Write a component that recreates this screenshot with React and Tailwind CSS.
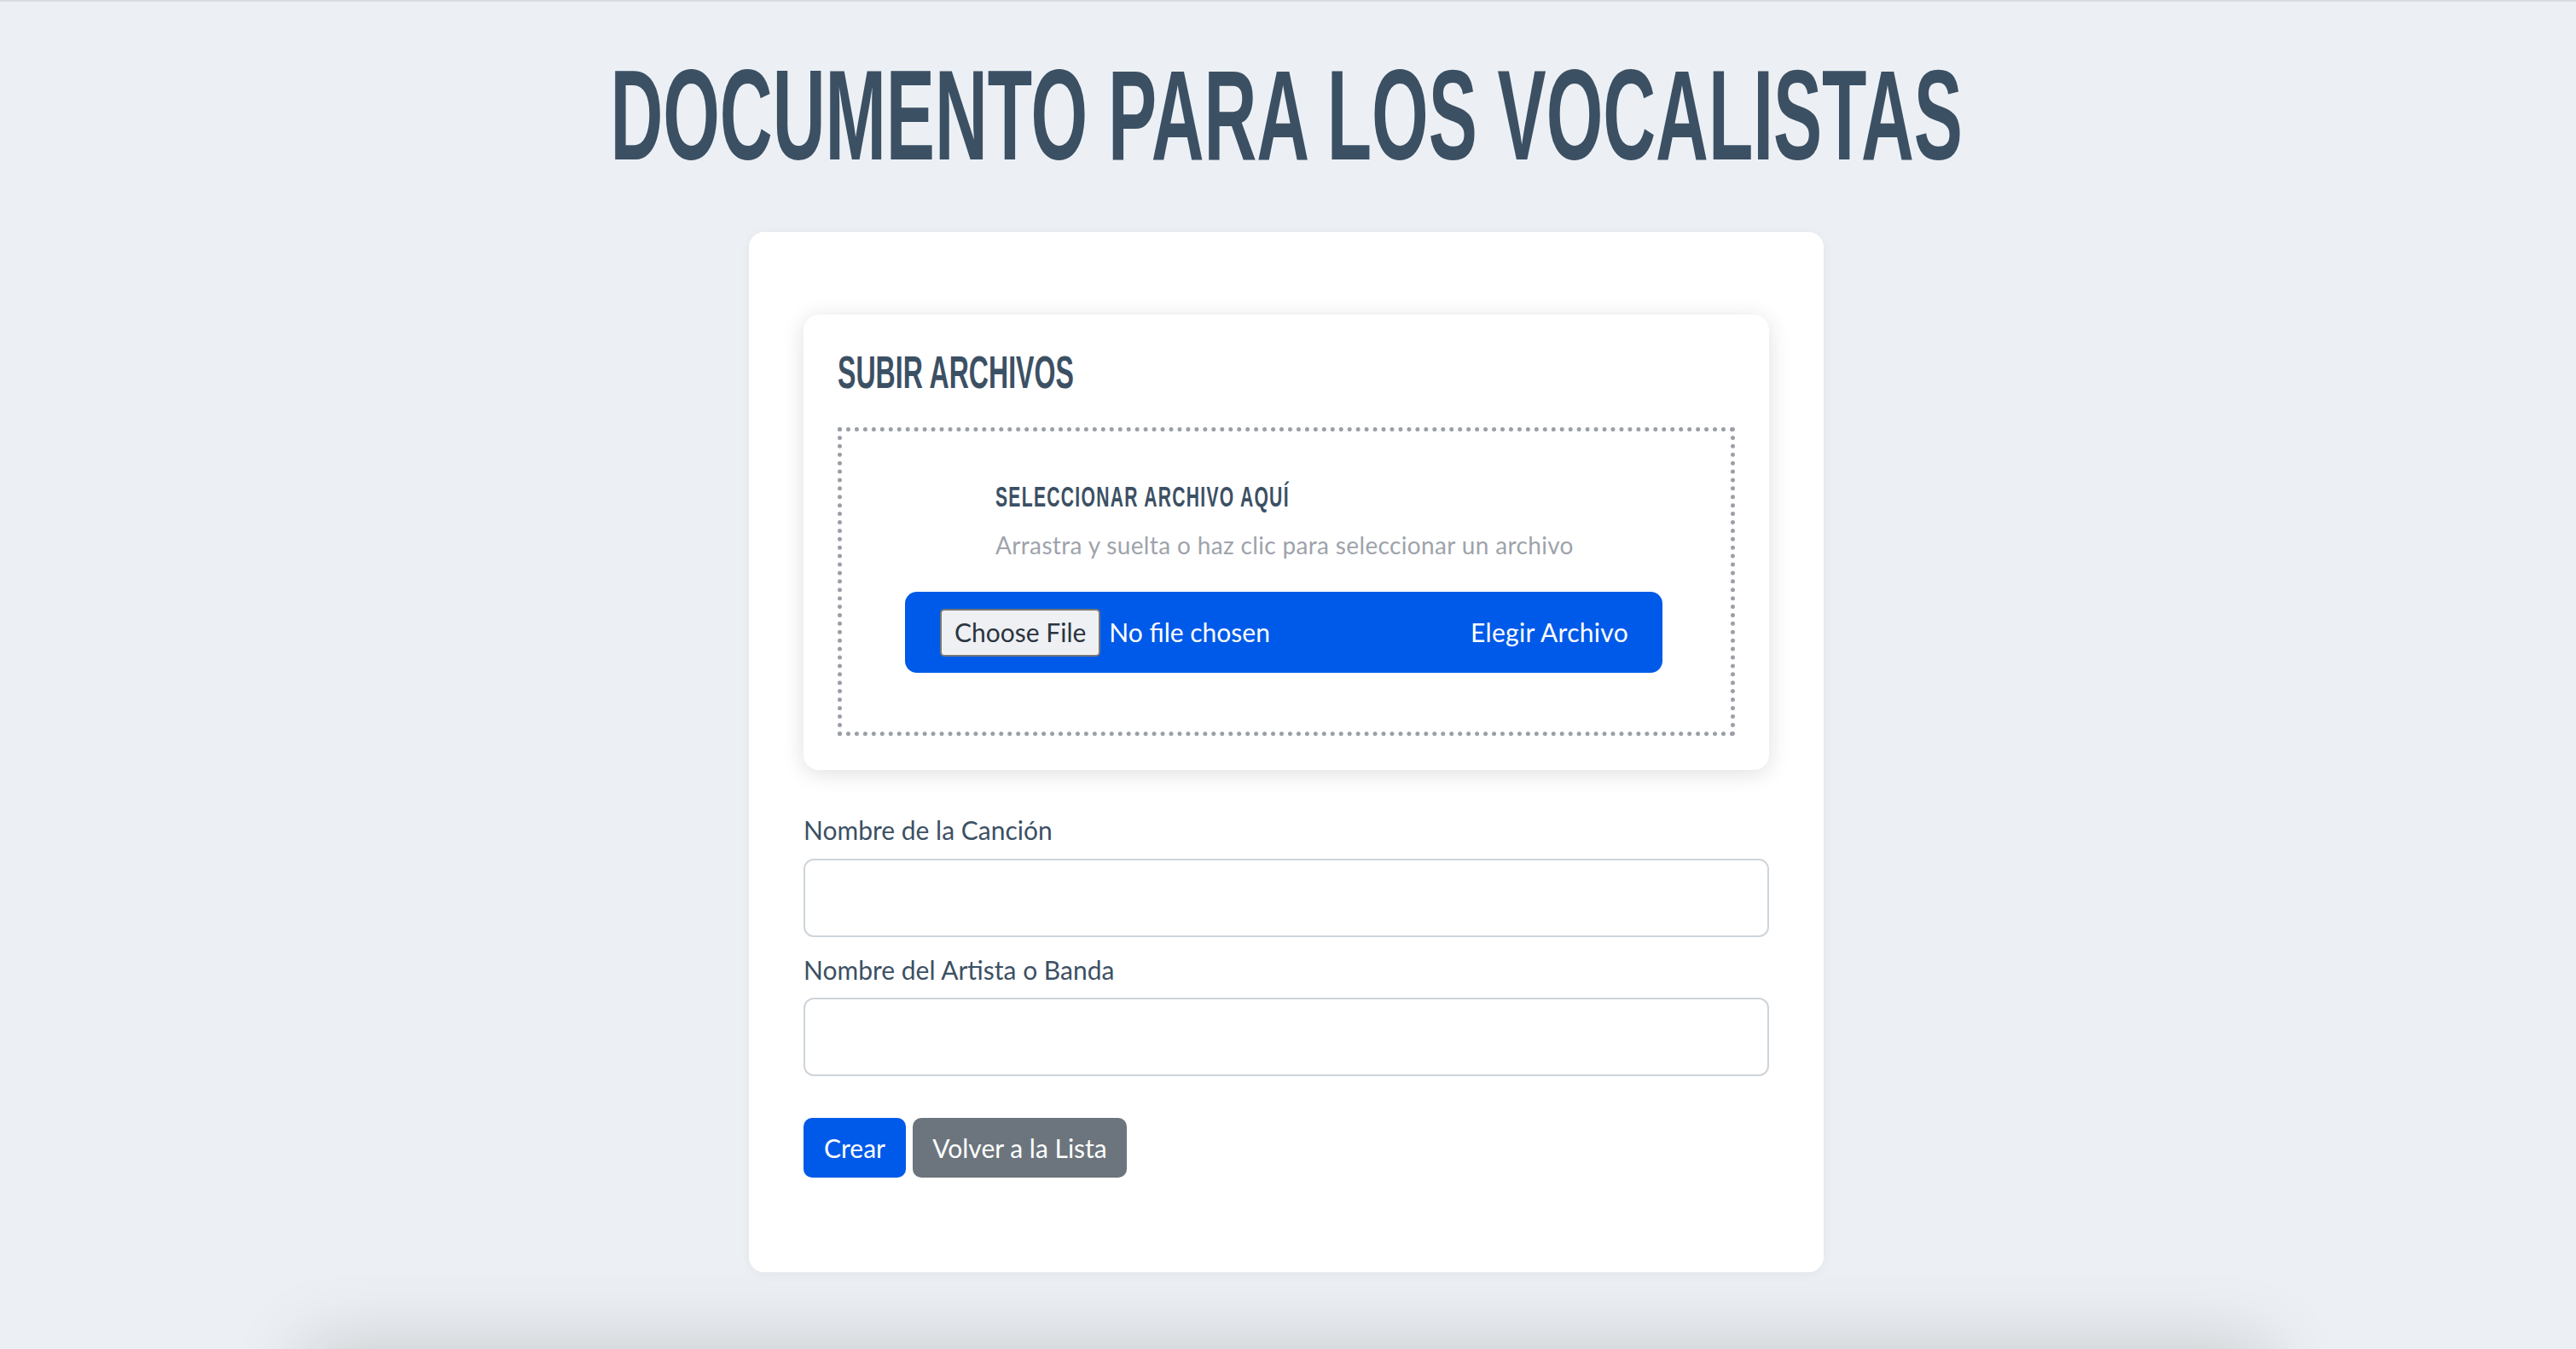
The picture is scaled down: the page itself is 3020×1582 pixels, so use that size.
export default function App() {
  const body = { fontFamily: "Lato, 'Noto Sans', sans-serif" };
  const display = { fontFamily: "'Liberation Sans', Arial, sans-serif" };

  return (
    <div className="min-h-screen bg-[#ecf0f4] border-t-2 border-[#d9dde2] overflow-hidden flex flex-col items-center pr-[4px]" style={body}>
      <h1
        className="mt-[57px] text-[151px] leading-none font-bold text-[#3c5064] whitespace-nowrap scale-x-[0.567]"
        style={display}
      >
        DOCUMENTO PARA LOS VOCALISTAS
      </h1>

      <div className="mt-[62px] w-[1260px] bg-white rounded-[18px] shadow-[0_2px_12px_rgba(0,0,0,0.05)] px-16 pt-[97px] pb-[111px]">
        <div className="rounded-[18px] bg-white shadow-[0_4px_26px_rgba(0,0,0,0.13)] px-10 pt-[40px] pb-[40px]">
          <h3
            className="text-[54px] leading-none font-bold text-[#3c5064] whitespace-nowrap origin-left scale-x-[0.594]"
            style={display}
          >
            SUBIR ARCHIVOS
          </h3>

          <div className="mt-[38px] h-[362px] border-[5px] border-dotted border-[#9a9fa7] px-[74px] pt-[60px]">
            <div className="pl-[106px]">
              <h4
                className="text-[33px] leading-none font-bold text-[#3c5064] whitespace-nowrap origin-left scale-x-[0.64] tracking-[2px]"
                style={display}
              >
                SELECCIONAR ARCHIVO AQUÍ
              </h4>
              <p className="mt-[20px] text-[28px] leading-[40px] text-[#9ea3ab] tracking-[0.35px]">
                Arrastra y suelta o haz clic para seleccionar un archivo
              </p>
            </div>

            <label className="mt-[35px] h-[95px] w-[888px] bg-[#005ae9] rounded-[14px] flex items-center justify-between pl-[41px] pr-[40px] text-white text-[30px] cursor-pointer">
              <span className="flex items-center">
                <span className="h-[56px] px-[15px] flex items-center bg-[#eff0f3] border-2 border-[#767676] rounded-[5px] text-[#2b3440]">
                  Choose File
                </span>
                <span className="ml-[10px]">No file chosen</span>
              </span>
              <span className="tracking-[0.3px]">Elegir Archivo</span>
            </label>
          </div>
        </div>

        <label className="block mt-[50px] text-[30px] leading-[40px] text-[#3c5064]">Nombre de la Canción</label>
        <input className="block mt-[14px] w-full h-[92px] border-2 border-[#ced4da] rounded-[12px] bg-white outline-none px-6 text-[30px]" />

        <label className="block mt-[18px] text-[30px] leading-[40px] text-[#3c5064]">Nombre del Artista o Banda</label>
        <input className="block mt-[13px] w-full h-[92px] border-2 border-[#ced4da] rounded-[12px] bg-white outline-none px-6 text-[30px]" />

        <div className="mt-[49px] flex gap-2">
          <button className="w-[120px] h-[70px] rounded-[10px] bg-[#005ae9] text-white text-[30px]">Crear</button>
          <button className="w-[251px] h-[70px] rounded-[10px] bg-[#6c757d] text-white text-[30px]">Volver a la Lista</button>
        </div>
      </div>

      <div className="mt-[90px] w-[2300px] h-[120px] bg-[#e2e6eb] shadow-[0_0_90px_rgba(0,0,0,0.18)] shrink-0" />
    </div>
  );
}
